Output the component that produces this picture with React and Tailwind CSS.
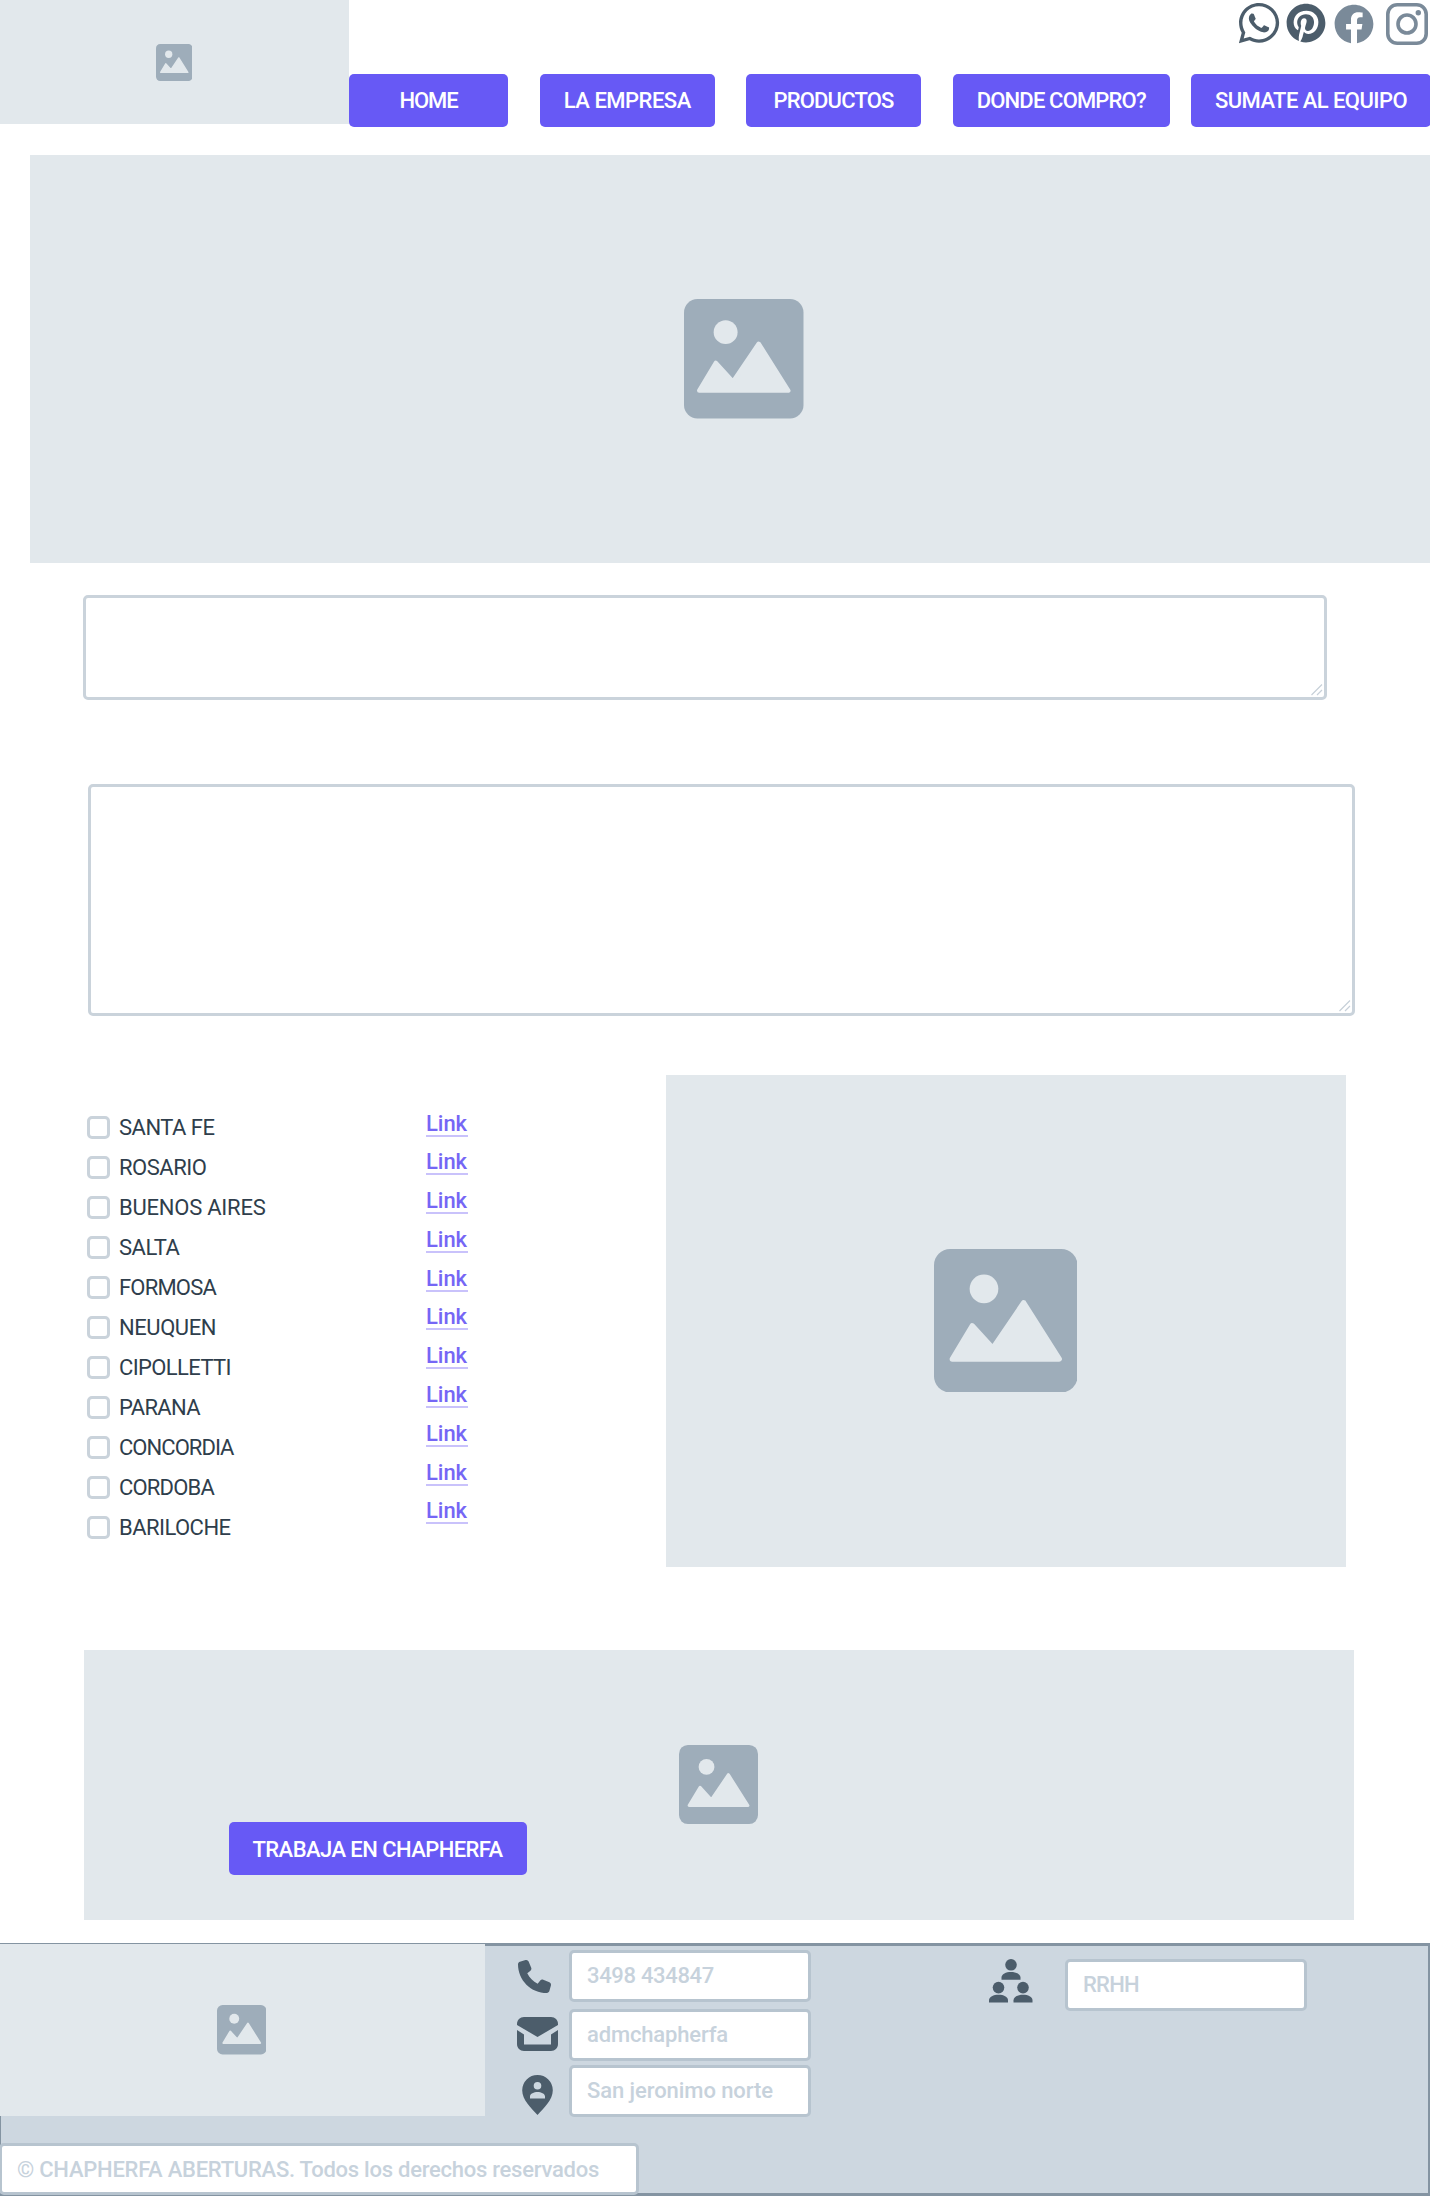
import { useLayoutEffect, useRef, useState } from "react";
import { FaWhatsapp, FaPinterest, FaFacebook } from "react-icons/fa";
import { FaPhone } from "react-icons/fa6";

/* A single line of text whose tracking is adjusted to fill a given width. */
function Line({ text, width, className = "" }) {
  const ref = useRef(null);
  const [spacing, setSpacing] = useState(0);
  useLayoutEffect(() => {
    const natural = ref.current.getBoundingClientRect().width;
    setSpacing((width - natural) / text.length);
  }, [text, width]);
  return (
    <span ref={ref} className={`inline-block whitespace-nowrap ${className}`} style={{ letterSpacing: `${spacing}px` }}>
      {text}
    </span>
  );
}

function Picture({ className }) {
  return (
    <svg viewBox="0 0 120 120" preserveAspectRatio="none" className={`shrink-0 ${className}`}>
      <rect width="120" height="120" rx="13.5" fill="#9eadba" />
      <g fill="#e2e8ec" stroke="#e2e8ec" strokeLinejoin="round">
        <circle cx="41.8" cy="33.3" r="12" stroke="none" />
        <path d="M15.3 92 32 64.2 49.2 83 75 45 104.7 92Z" strokeWidth="4.5" />
      </g>
    </svg>
  );
}

function Button({ text, textWidth, className }) {
  return (
    <button className={`flex h-[53px] shrink-0 items-center justify-center rounded-[5px] bg-[#6759f5] pt-[2px] font-medium text-white ${className}`}>
      <Line text={text} width={textWidth} />
    </button>
  );
}

function Area({ className }) {
  return (
    <div className={`flex items-end justify-end rounded-[5px] border-[3px] border-[#cad3db] bg-white ${className}`}>
      <svg viewBox="0 0 12 12" className="m-px size-3" stroke="#c7d0d9" strokeWidth="1.2">
        <path d="M.5 11 11 .5M6 11l5-5" />
      </svg>
    </div>
  );
}

function Field({ text, textWidth, className }) {
  return (
    <div className={`flex h-[52px] items-center rounded-[5px] border-[3px] border-[#b7c4cf] bg-white pl-[15px] pt-px font-medium text-[#c7d2dc] ${className}`}>
      <Line text={text} width={textWidth} />
    </div>
  );
}

const cities = [
  ["SANTA FE", 95.5],
  ["ROSARIO", 87.5],
  ["BUENOS AIRES", 146.5],
  ["SALTA", 60.5],
  ["FORMOSA", 97],
  ["NEUQUEN", 97],
  ["CIPOLLETTI", 112],
  ["PARANA", 81],
  ["CONCORDIA", 114.5],
  ["CORDOBA", 95],
  ["BARILOCHE", 111.5],
];

function Person({ x, y }) {
  return (
    <g transform={`translate(${x} ${y})`}>
      <circle cx="9.5" cy="5.8" r="5.8" />
      <path d="M0 20.8V18.6C0 15 4.5 13 9.5 13S19 15 19 18.6V20.8Z" />
    </g>
  );
}

export default function App() {
  return (
    <div className="h-[2196px] w-[1430px] overflow-hidden bg-white font-['Roboto',sans-serif] text-[22px] leading-none">
      <header className="flex h-[155px] items-start">
        <div className="flex h-[124px] w-[349px] shrink-0 items-center justify-center bg-[#e2e8ec] pr-px">
          <Picture className="h-[37px] w-[36.5px]" />
        </div>
        <div className="flex flex-1 flex-col">
          <div className="flex h-[73.5px] items-start justify-end pr-[3px] pt-[3px]">
            <FaWhatsapp className="mr-1 size-[46px] -mt-[3px] text-[#4c5d6b]" />
            <FaPinterest className="mr-2 size-10 text-[#4c5d6b]" />
            <FaFacebook className="mr-3 mt-px size-10 text-[#7a8a99]" />
            <svg viewBox="0 0 42 42" className="size-[42px]" fill="none" stroke="#7a8a99" strokeWidth="3.6">
              <rect x="1.8" y="1.8" width="38.4" height="38.4" rx="9.5" />
              <circle cx="21" cy="21" r="9" />
              <circle cx="32.3" cy="9.8" r="2.7" fill="#7a8a99" stroke="none" />
            </svg>
          </div>
          <nav className="flex">
            <Button text="HOME" textWidth={58} className="mr-8 w-[159px]" />
            <Button text="LA EMPRESA" textWidth={127} className="mr-[31.5px] w-[174.5px]" />
            <Button text="PRODUCTOS" textWidth={120} className="mr-[31.5px] w-[175px]" />
            <Button text="DONDE COMPRO?" textWidth={169} className="mr-[21px] w-[217.5px]" />
            <Button text="SUMATE AL EQUIPO" textWidth={192} className="w-[240px]" />
          </nav>
        </div>
      </header>

      <section className="ml-[30px] flex h-[408px] w-[1428px] items-center justify-center bg-[#e2e8ec]">
        <Picture className="size-[119.5px]" />
      </section>

      <Area className="ml-[82.5px] mt-[32px] h-[104.5px] w-[1244.5px]" />
      <Area className="ml-[87.5px] mt-[84px] h-[232px] w-[1267.5px]" />

      <section className="mt-[59.5px] flex h-[492px] items-start">
        <ul className="ml-[87px] mt-[32.5px] w-[338.5px]">
          {cities.map(([name, width]) => (
            <li key={name} className="flex h-10 items-center text-[#2f3e4c]">
              <span className="mr-[9px] size-[23px] rounded-[5px] border-[3px] border-[#cad3db]" />
              <Line text={name} width={width} />
            </li>
          ))}
        </ul>
        <ul className="mt-[35.5px] w-[240px]">
          {cities.map(([name]) => (
            <li key={name} className="h-[38.8px] pt-[2px] font-medium text-[#7566f5]">
              <a className="inline-block border-b-2 border-[#c9c2fb] px-[.5px] leading-[22px]">
                <Line text="Link" width={41} />
              </a>
            </li>
          ))}
        </ul>
        <div className="flex h-[492px] w-[680px] items-center justify-center bg-[#e2e8ec] pb-px">
          <Picture className="size-[143.5px]" />
        </div>
      </section>

      <section className="relative ml-[83.5px] mt-[83px] flex h-[270px] w-[1270px] items-center justify-center bg-[#e2e8ec] pb-px">
        <Picture className="size-[79px]" />
        <Button text="TRABAJA EN CHAPHERFA" textWidth={250} className="absolute left-[145px] top-[172px] w-[298px]" />
      </section>

      <footer className="mt-[23px] h-[253px] border-y-[3px] border-r-2 border-l border-[#8494a2] bg-[#cdd7e0]">
        <div className="flex h-[197px] items-start">
          <div className="-ml-px -mt-[2px] flex h-[172px] w-[485px] shrink-0 items-center justify-center bg-[#e2e8ec] pr-[2px]">
            <Picture className="size-[49.5px]" />
          </div>
          <div className="ml-8 w-[52px] pt-[13.5px] text-[#4c5d6b]">
            <FaPhone className="ml-[1px] size-[33px]" />
            <svg viewBox="0 0 41 34" className="mt-[24.5px] h-[34px] w-[41px]" fill="currentColor">
              <path d="M0 8V7C0 3 3 0 7 0H34C38 0 41 3 41 7V8L20.5 20Z" />
              <path d="M0 13 7 17.5V27.5H34V17.5L41 13V27C41 31 38 34 34 34H7C3 34 0 31 0 27Z" />
            </svg>
            <svg viewBox="0 0 31 40" className="ml-[5px] mt-6 h-10 w-[31px]" fill="currentColor">
              <path fillRule="evenodd" d="M15.5 0A15.3 15.3 0 0 1 30.8 15.3C30.8 25 22 33 15.5 40C9 33 .2 25 .2 15.3A15.3 15.3 0 0 1 15.5 0ZM15.5 7A3.8 3.8 0 1 0 15.5 14.6A3.8 3.8 0 1 0 15.5 7ZM8 23.5H23V21.5C23 18.5 19 17 15.5 17S8 18.5 8 21.5Z" />
            </svg>
          </div>
          <div className="flex w-[242px] flex-col pt-[3.5px]">
            <Field text="3498 434847" textWidth={127} className="mb-[7px]" />
            <Field text="admchapherfa" textWidth={141} className="mb-1" />
            <Field text="San jeronimo norte" textWidth={186} />
          </div>
          <svg viewBox="0 0 44 44" className="ml-[178px] mt-[13px] size-11" fill="#4c5d6b">
            <Person x={12.5} y={0} />
            <Person x={0} y={22.8} />
            <Person x={24.5} y={22.8} />
          </svg>
          <Field text="RRHH" textWidth={56} className="ml-8 mt-[12.5px] w-[242px]" />
        </div>
        <Field text="© CHAPHERFA ABERTURAS. Todos los derechos reservados" textWidth={582} className="-ml-[2px] w-[640px]" />
      </footer>
    </div>
  );
}
